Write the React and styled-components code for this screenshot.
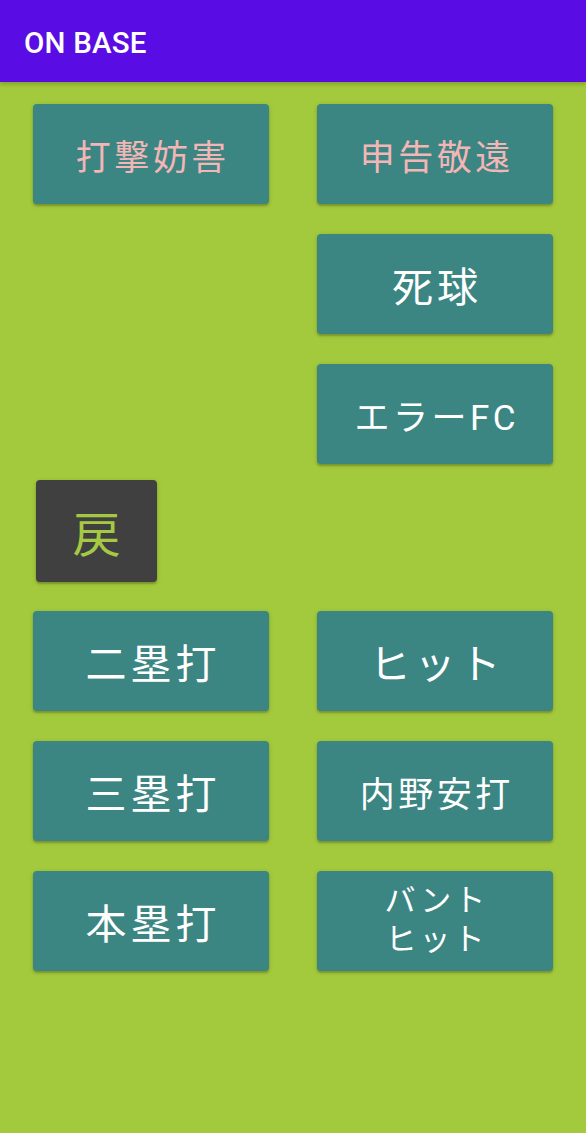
import React from 'react'
import styled, { createGlobalStyle } from 'styled-components'

const GlobalStyle = createGlobalStyle`
  html, body {
    margin: 0;
    padding: 0;
    background: #a3c93c;
  }
  body {
    font-family: Roboto, "Noto Sans CJK JP", sans-serif;
  }
`

const topRows = [
  [{ label: '打撃妨害', size: 35, pink: true }, { label: '申告敬遠', size: 35, pink: true }],
  [null, { label: '死球', size: 41 }],
  [null, { label: 'エラーFC', size: 35 }],
]

const bottomRows = [
  [{ label: '二塁打', size: 41 }, { label: 'ヒット', size: 41 }],
  [{ label: '三塁打', size: 41 }, { label: '内野安打', size: 35 }],
  [{ label: '本塁打', size: 41 }, { label: ['バント', 'ヒット'], size: 31 }],
]

function Cell({ item }) {
  if (!item) return <Blank />
  const lines = Array.isArray(item.label) ? item.label : [item.label]
  return (
    <ActionButton $size={item.size} $pink={item.pink} $multi={lines.length > 1}>
      {lines.map((l) => (
        <Line key={l}>{l}</Line>
      ))}
    </ActionButton>
  )
}

function ButtonGrid({ rows }) {
  return (
    <Grid>
      {rows.flat().map((item, i) => (
        <Cell key={i} item={item} />
      ))}
    </Grid>
  )
}

export default function App() {
  return (
    <Screen>
      <GlobalStyle />
      <AppBar>ON BASE</AppBar>
      <Content>
        <ButtonGrid rows={topRows} />
        <BackButton>戻</BackButton>
        <ButtonGrid rows={bottomRows} />
      </Content>
    </Screen>
  )
}

const Screen = styled.div`
  min-height: 1133px;
  background: #a3c93c;
`

const AppBar = styled.header`
  box-sizing: border-box;
  height: 82px;
  background: #5a0ce4;
  color: #fff;
  display: flex;
  align-items: center;
  padding: 3px 0 0 24px;
  font-family: Roboto, sans-serif;
  font-weight: 500;
  font-size: 29.5px;
  letter-spacing: 0.2px;
  box-shadow: 0 2px 4px rgba(0, 0, 0, 0.22);
  position: relative;
  z-index: 1;
`

const Content = styled.main`
  display: flex;
  flex-direction: column;
  padding: 22px 33px 0;
`

const Grid = styled.div`
  display: grid;
  grid-template-columns: 236px 236px;
  grid-auto-rows: 100px;
  column-gap: 48px;
  row-gap: 30px;
`

const Blank = styled.div``

const ActionButton = styled.button`
  box-sizing: border-box;
  border: none;
  border-radius: 4px;
  background: #3b8582;
  color: ${(p) => (p.$pink ? '#f3b6b6' : '#ffffff')};
  font-family: Roboto, "Noto Sans CJK JP", sans-serif;
  font-size: ${(p) => p.$size}px;
  letter-spacing: 0.1em;
  line-height: 1.25;
  display: flex;
  flex-direction: column;
  align-items: center;
  justify-content: center;
  box-shadow: 0 2px 2px rgba(0, 0, 0, 0.2), 0 1px 5px rgba(0, 0, 0, 0.12);
  padding: ${(p) => (p.$multi ? '0' : '9px')} 0 0 0.1em;
`

const Line = styled.span`
  display: block;
`

const BackButton = styled.button`
  width: 121px;
  height: 102px;
  margin: 16px 0 29px 3px;
  border: none;
  border-radius: 4px;
  background: #404040;
  color: #a5c943;
  font-family: "Noto Sans CJK JP", sans-serif;
  font-size: 48px;
  display: flex;
  align-items: center;
  justify-content: center;
  box-shadow: 0 2px 2px rgba(0, 0, 0, 0.2), 0 1px 5px rgba(0, 0, 0, 0.12);
  padding: 0;
`
